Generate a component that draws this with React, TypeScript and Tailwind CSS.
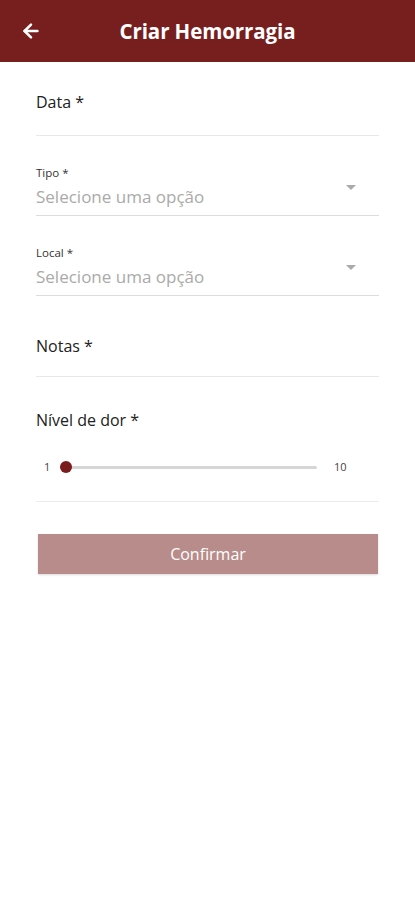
import { ArrowLeft } from 'lucide-react';

const font = { fontFamily: '"Open Sans", "Noto Sans", sans-serif' };

function TextField({ label, top = 'pt-[29px] pb-[22px]' }: { label: string; top?: string }) {
  return (
    <div className={`border-b border-[#e8e8e8] ${top}`}>
      <div className="text-[16px] leading-[22px] text-[#222]">{label}</div>
    </div>
  );
}

function SelectField({ label }: { label: string }) {
  return (
    <div className="flex items-end border-b border-[#dcdcdc] pt-[30px] pb-[6px]">
      <div className="flex-1">
        <div className="text-[11.5px] leading-[14px] text-[#333]">{label}</div>
        <div className="mt-[5px] text-[17px] leading-[24px] text-[#aaa]">Selecione uma opção</div>
      </div>
      <svg width="12" height="8" viewBox="0 0 12 8" className="mr-[22px] mb-[17px]">
        <path d="M1 1 L6 6 L11 1 Z" fill="#aaa" />
      </svg>
    </div>
  );
}

export default function App() {
  return (
    <div className="min-h-[900px] w-[415px] bg-white" style={font}>
      <div className="relative flex h-[62px] items-center justify-center bg-[#771f1f]">
        <ArrowLeft className="absolute left-[20px] h-[22px] w-[22px] text-white" strokeWidth={2.75} />
        <span className="text-[20.5px] font-bold tracking-[-0.1px] text-white">Criar Hemorragia</span>
      </div>

      <div className="px-9">
        <TextField label="Data *" />
        <SelectField label="Tipo *" />
        <SelectField label="Local *" />
        <TextField label="Notas *" top="pt-[39px] pb-[19px]" />

        <div className="border-b border-[#ececec] pt-[32px] pb-[25px]">
          <div className="text-[16px] leading-[22px] text-[#222]">Nível de dor *</div>
          <div className="mt-[28px] flex items-center">
            <span className="w-[24px] pl-[8px] text-[11px] text-[#444]">1</span>
            <div className="relative flex h-[12px] flex-1 items-center">
              <div className="h-[3px] w-full rounded-full bg-[#d6d6d6]" />
              <div className="absolute left-0 h-[12px] w-[12px] rounded-full bg-[#7a1c1c]" />
            </div>
            <span className="w-[62px] pl-[17px] text-[11px] text-[#444]">10</span>
          </div>
        </div>

        <button className="mt-[32px] ml-[2px] h-[40px] w-[340px] bg-[#b88c8a] text-[16px] text-white shadow-[0_1px_2px_rgba(0,0,0,0.15)]">
          Confirmar
        </button>
      </div>
    </div>
  );
}
